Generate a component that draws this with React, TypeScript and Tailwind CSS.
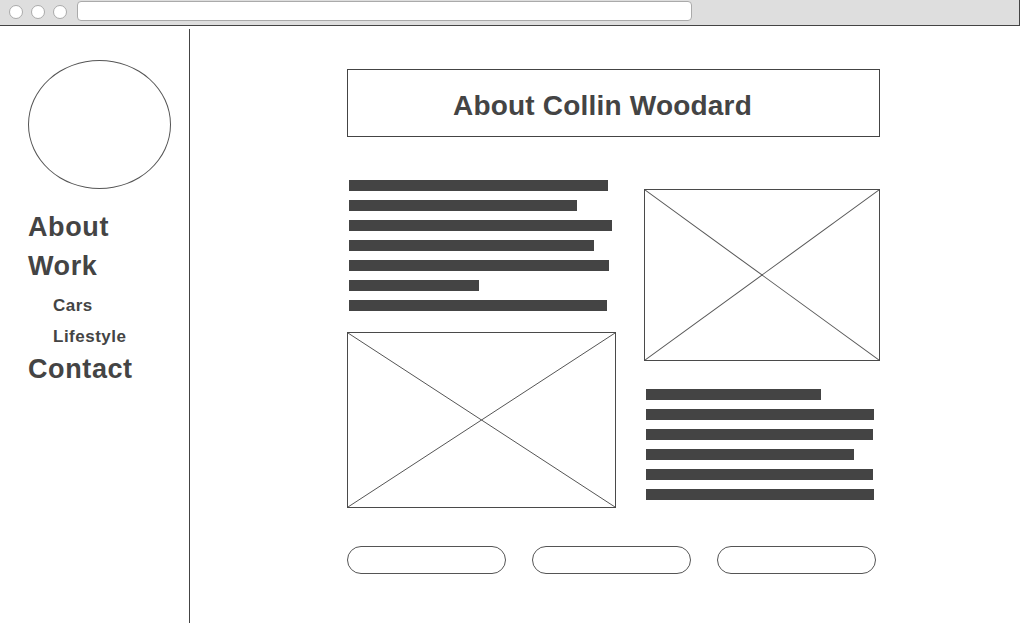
const ink = "text-[#444444]";

function Bar({ w }: { w: number }) {
  return <div className="h-[11px] bg-[#444444]" style={{ width: w }} />;
}

function ImagePlaceholder({ className }: { className: string }) {
  return (
    <div className={`relative border border-[#4a4a4a] bg-white ${className}`}>
      <svg className="absolute inset-0 h-full w-full" preserveAspectRatio="none" viewBox="0 0 100 100">
        <line x1="0" y1="0" x2="100" y2="100" stroke="#555555" strokeWidth="1" vectorEffect="non-scaling-stroke" />
        <line x1="100" y1="0" x2="0" y2="100" stroke="#555555" strokeWidth="1" vectorEffect="non-scaling-stroke" />
      </svg>
    </div>
  );
}

function BrowserBar() {
  return (
    <div className="flex h-[26px] items-start border-r border-b border-[#444444] bg-[#dedede]">
      <div className="ml-[9px] mt-[5px] flex gap-[8px]">
        <span className="h-[14px] w-[14px] rounded-full border border-[#aaaaaa] bg-white" />
        <span className="h-[14px] w-[14px] rounded-full border border-[#aaaaaa] bg-white" />
        <span className="h-[14px] w-[14px] rounded-full border border-[#aaaaaa] bg-white" />
      </div>
      <div className="ml-[10px] mt-[1px] h-[20px] w-[615px] rounded-[4px] border border-[#aaaaaa] bg-white" />
    </div>
  );
}

function Sidebar() {
  return (
    <aside className="w-[190px] shrink-0 border-r border-[#444444] pl-[28px]">
      <div className="mt-[31px] h-[129px] w-[143px] rounded-[50%] border border-[#555555]" />
      <nav className={`mt-[19px] font-bold ${ink}`}>
        <div className="text-[27px] leading-[39px] tracking-[0.6px]">About</div>
        <div className="text-[27px] leading-[39px] tracking-[0.6px]">Work</div>
        <div className="mt-[4px] pl-[25px] text-[17px] leading-[31px] tracking-[0.5px]">Cars</div>
        <div className="pl-[25px] text-[17px] leading-[31px] tracking-[0.5px]">Lifestyle</div>
        <div className="-mt-[2px] text-[27px] leading-[39px] tracking-[0.6px]">Contact</div>
      </nav>
    </aside>
  );
}

export default function App() {
  const leftBars = [259, 228, 263, 245, 260, 130, 258];
  const rightBars = [175, 228, 227, 208, 227, 228];

  return (
    <div className="h-[623px] w-[1020px] overflow-hidden bg-white font-['Liberation_Sans',Arial,sans-serif]">
      <BrowserBar />
      <div className="mt-[3px] flex h-[594px]">
        <Sidebar />
        <main className="pl-[157px] pt-[40px]">
          <div className="h-[68px] w-[533px] border border-[#444444] pr-[22px] pt-[20px] text-center">
            <h1 className={`text-[28px] font-bold leading-[32px] tracking-[0.2px] ${ink}`}>About Collin Woodard</h1>
          </div>

          <div className="grid grid-cols-[269px_236px] items-start gap-x-[28px]">
            <div className="pt-[43px]">
              <div className="flex flex-col gap-[9px] pl-[2px]">
                {leftBars.map((w, i) => (
                  <Bar key={i} w={w} />
                ))}
              </div>
              <ImagePlaceholder className="mt-[21px] h-[176px] w-[269px]" />
            </div>
            <div className="pt-[52px]">
              <ImagePlaceholder className="h-[172px] w-[236px]" />
              <div className="mt-[28px] flex flex-col gap-[9px] pl-[2px]">
                {rightBars.map((w, i) => (
                  <Bar key={i} w={w} />
                ))}
              </div>
            </div>
          </div>

          <div className="mt-[38px] flex w-[529px] justify-between">
            <button className="h-[28px] w-[159px] rounded-full border border-[#555555] bg-white" />
            <button className="h-[28px] w-[159px] rounded-full border border-[#555555] bg-white" />
            <button className="h-[28px] w-[159px] rounded-full border border-[#555555] bg-white" />
          </div>
        </main>
      </div>
    </div>
  );
}
